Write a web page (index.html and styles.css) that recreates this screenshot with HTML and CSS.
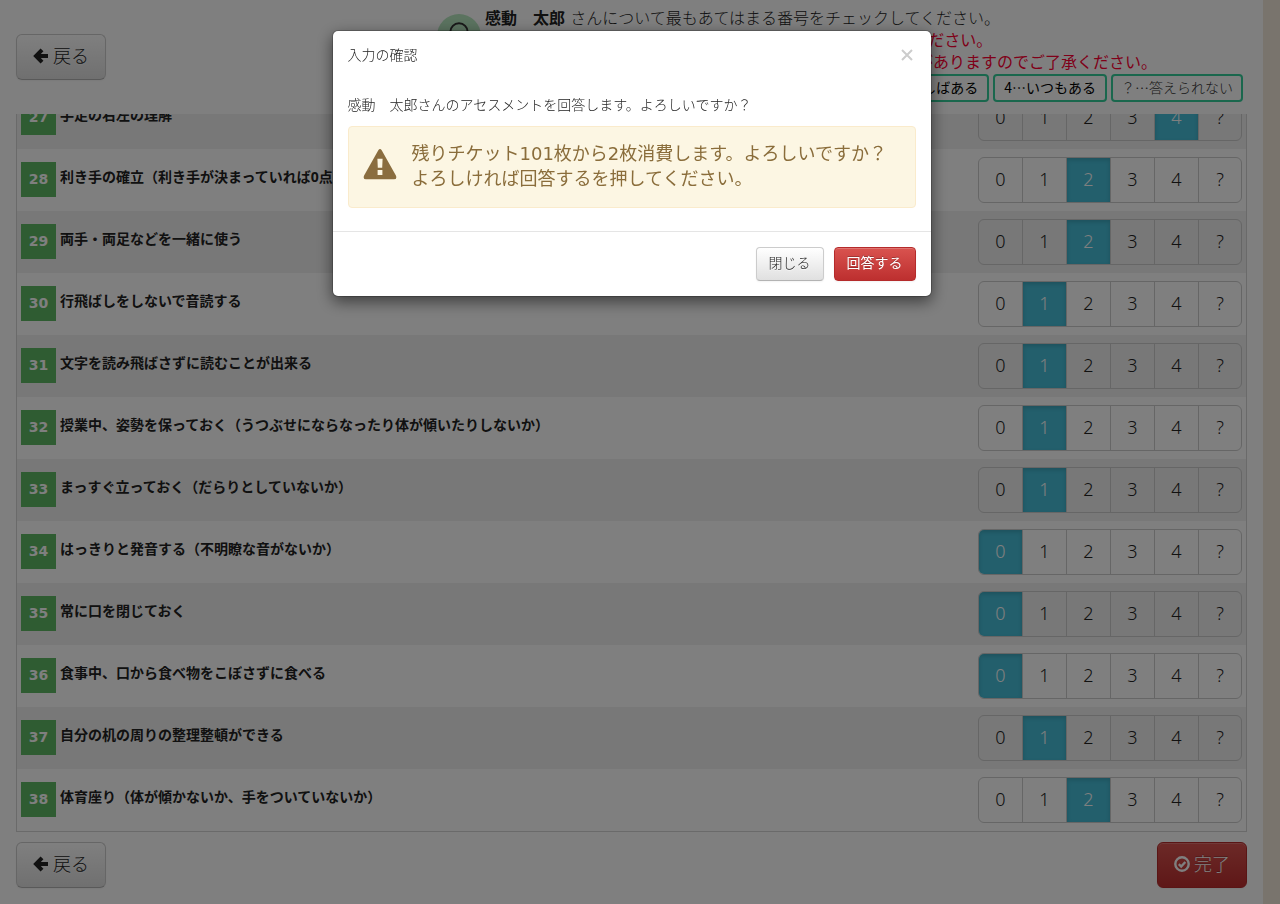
FILE: index.html
```html
<!DOCTYPE html>
<html lang="ja">
<head>
<meta charset="utf-8">
<meta name="viewport" content="width=device-width, initial-scale=1">
<title>アセスメント入力</title>
<link rel="stylesheet" href="styles.css">
</head>
<body>
<div class="page">
  <header class="top">
    <button type="button" class="btn btn-large">
      <svg class="icon-arrow" viewBox="0 0 16 16" aria-hidden="true"><path d="M9 1.800 3 8l6 6.200M3.500 8H15"/></svg>
      <span>戻る</span>
    </button>
    <div class="guide">
      <svg class="avatar" viewBox="0 0 44 44" aria-hidden="true"><circle class="avatar-bg" cx="22" cy="22" r="22"/><circle class="avatar-line" cx="22" cy="18" r="8.700"/><path class="avatar-line" d="M8 38c2-14 26-14 28 0"/></svg>
      <div class="guide-text">
        <p><strong>感動　太郎</strong> さんについて最もあてはまる番号をチェックしてください。</p>
        <p class="alert-line">すべての設問項目について、もれなく番号を選んで回答してください。</p>
        <p class="alert-line">途中で画面を閉じますと回答された内容が保存されない場合がありますのでご了承ください。</p>
        <ul class="legend">
          <li>0…まったくない</li>
          <li>1…まれにある</li>
          <li>2…ときどきある</li>
          <li>3…しばしばある</li>
          <li>4…いつもある</li>
          <li class="legend-muted">？…答えられない</li>
        </ul>
      </div>
    </div>
  </header>
  <main class="questions" id="questions"></main>
  <footer class="bottom">
    <button type="button" class="btn btn-large">
      <svg class="icon-arrow" viewBox="0 0 16 16" aria-hidden="true"><path d="M9 1.800 3 8l6 6.200M3.500 8H15"/></svg>
      <span>戻る</span>
    </button>
    <button type="button" class="btn btn-large btn-danger">
      <svg class="icon-check" viewBox="0 0 16 16" aria-hidden="true"><circle cx="8" cy="8" r="6.700"/><path d="M4.800 8.200 7.200 10.600 11.300 6"/></svg>
      <span>完了</span>
    </button>
  </footer>
</div>

<div class="backdrop">
  <section class="modal" role="dialog" aria-modal="true" aria-labelledby="modal-title">
    <div class="modal-header">
      <h2 id="modal-title">入力の確認</h2>
      <button type="button" class="close" aria-label="閉じる"><svg viewBox="0 0 12 12" aria-hidden="true"><path d="M1 1l10 10M11 1 1 11"/></svg></button>
    </div>
    <div class="modal-body">
      <p>感動　太郎さんのアセスメントを回答します。よろしいですか？</p>
      <div class="notice">
        <svg class="icon-warning" viewBox="0 0 34 32" aria-hidden="true"><path fill-rule="evenodd" d="M15.300 1.200Q17-1 18.700 1.200L32.900 26.500Q34.300 30.300 31 30.300H3Q-.3 30.300 1.100 26.500ZM14.400 9.800 14.800 18.700H19.200L19.600 9.800ZM14.600 21V26H19.400V21Z"/></svg>
        <p>残りチケット101枚から2枚消費します。よろしいですか？<br>よろしければ回答するを押してください。</p>
      </div>
    </div>
    <div class="modal-footer">
      <button type="button" class="btn">閉じる</button>
      <button type="button" class="btn btn-danger">回答する</button>
    </div>
  </section>
</div>
<script src="app.js"></script>
</body>
</html>
```

FILE: styles.css
```css
* { box-sizing: border-box; }

body {
  margin: 0;
  background: #f3e8da;
  color: #222;
  font: 300 14px/20px "Noto Sans", "Noto Sans CJK JP", sans-serif;
}

p, h2, ul { margin: 0; padding: 0; }

button { font: inherit; color: inherit; cursor: pointer; }

.page {
  display: flex;
  flex-direction: column;
  height: 100vh;
  margin-right: 17px;
  padding: 0 16px;
  background: #fff;
}

.top {
  display: flex;
  flex: none;
  align-items: center;
  justify-content: space-between;
  height: 114px;
}

.guide {
  display: flex;
  padding: 0 4px 4px 0;
  white-space: nowrap;
}

.avatar { width: 44px; height: 44px; margin-top: 6px; }
.avatar-bg { fill: #b6e6bf; }
.avatar-line { fill: none; stroke: #333; stroke-width: 2; }

.guide-text {
  font-family: "DejaVu Sans", "Noto Sans CJK JP", sans-serif;
  font-size: 16px;
  line-height: 22px;
}
.guide-text p { padding-left: 4px; }
.guide-text strong { font-weight: 700; }
.alert-line { color: #ff0033; font-weight: 400; }

.legend {
  display: flex;
  justify-content: flex-end;
  gap: 4px;
  list-style: none;
  font: 400 14px/22px "Noto Sans CJK JP", sans-serif;
  color: #000;
}
.legend li {
  padding: 0 9px 2px;
  border: 2px solid #35cf9b;
  border-radius: 4px;
}
.legend .legend-muted { padding: 0 8px 2px; color: #333; font-weight: 300; }

.questions {
  display: flex;
  flex: 1;
  flex-direction: column;
  justify-content: flex-end;
  min-height: 0;
  overflow: hidden;
  border: 1px solid #d4d4d4;
  border-top: 0;
}

.question {
  display: flex;
  flex: none;
  gap: 4px;
  min-width: 0;
  height: 62px;
  margin: 0;
  padding: 8px 4px;
  border: 0;
}
.question:nth-child(odd) { background: #f0f0f0; }

.number {
  width: 35px;
  height: 35px;
  margin-top: 5px;
  background: #5eb864;
  color: #fff;
  font: 700 14px/35px "DejaVu Sans", sans-serif;
  text-align: center;
}

.label {
  flex: 1;
  padding-top: 10px;
  font-weight: 700;
}

.choices {
  display: flex;
  height: 46px;
  border: 1px solid #ccc;
  border-radius: 6px;
  overflow: hidden;
}
.choices label {
  position: relative;
  width: 44px;
  border-right: 1px solid #ccc;
  font-size: 18px;
  line-height: 42px;
  text-align: center;
  cursor: pointer;
}
.choices label:last-child { width: 42px; border-right: 0; }
.choices input {
  position: absolute;
  inset: 0;
  margin: 0;
  opacity: 0;
}
.choices label:has(input:checked) {
  background: #46bed8;
  color: #fff;
  box-shadow: inset 0 2px 4px rgba(0, 0, 0, .15);
}

.bottom {
  display: flex;
  flex: none;
  justify-content: space-between;
  padding: 10px 0 16px;
}

.btn {
  display: inline-flex;
  align-items: center;
  justify-content: center;
  height: 34px;
  padding: 0 12px 2px;
  border: 1px solid #ccc;
  border-bottom-color: #b3b3b3;
  border-radius: 4px;
  background: linear-gradient(#fff, #e0e0e0);
  box-shadow: inset 0 1px 0 rgba(255, 255, 255, .2), 0 1px 2px rgba(0, 0, 0, .05);
  text-shadow: 0 1px 1px rgba(255, 255, 255, .75);
}
.btn-danger {
  border-color: #b52b2b;
  background: linear-gradient(#d9534f, #bd2f2f);
  color: #fff;
  font-weight: 400;
  text-shadow: 0 -1px 0 rgba(0, 0, 0, .25);
}
.btn-large {
  gap: 4px;
  height: 46px;
  padding: 0 16px 2px;
  border-radius: 6px;
  font-size: 18px;
  font-weight: 300;
}
.btn-large svg { width: 16px; height: 16px; fill: none; stroke: currentColor; }
.icon-arrow { stroke-width: 4; }
.icon-check { stroke-width: 2.400; }

.backdrop {
  position: fixed;
  inset: 0;
  padding: 30px 17px 30px 0;
  background: rgba(0, 0, 0, .5);
}

.modal {
  max-width: 600px;
  margin: 0 auto;
  border: 1px solid rgba(0, 0, 0, .2);
  border-radius: 6px;
  background: #fff;
  background-clip: padding-box;
  box-shadow: 0 5px 15px rgba(0, 0, 0, .5);
}

.modal-header {
  display: flex;
  align-items: center;
  justify-content: space-between;
  padding: 14px 15px;
}
.modal-header h2 { font-size: 14px; font-weight: 300; }

.close {
  padding: 3px;
  border: 0;
  background: none;
  line-height: 0;
}
.close svg { width: 12px; height: 12px; fill: none; stroke: #ccc; stroke-width: 2; }

.modal-body { padding: 16px 15px 23px; }

.notice {
  display: flex;
  gap: 15px;
  min-height: 82px;
  margin-top: 11px;
  padding: 14px;
  border: 1px solid #faebcc;
  border-radius: 4px;
  background: #fcf6e3;
  color: #8a6d3b;
  font-family: "DejaVu Sans", "Noto Sans CJK JP", sans-serif;
  font-size: 18px;
  font-weight: 400;
  line-height: 25px;
}
.icon-warning { flex: none; width: 34px; height: 32px; margin-top: 8px; fill: #8a6d3f; }

.modal-footer {
  display: flex;
  justify-content: flex-end;
  gap: 10px;
  padding: 15px;
  border-top: 1px solid #e5e5e5;
}
```

FILE: app.js
```js
const questions = [
  [27, "手足の右左の理解", 4],
  [28, "利き手の確立（利き手が決まっていれば0点）", 2],
  [29, "両手・両足などを一緒に使う", 2],
  [30, "行飛ばしをしないで音読する", 1],
  [31, "文字を読み飛ばさずに読むことが出来る", 1],
  [32, "授業中、姿勢を保っておく（うつぶせにならなったり体が傾いたりしないか）", 1],
  [33, "まっすぐ立っておく（だらりとしていないか）", 1],
  [34, "はっきりと発音する（不明瞭な音がないか）", 0],
  [35, "常に口を閉じておく", 0],
  [36, "食事中、口から食べ物をこぼさずに食べる", 0],
  [37, "自分の机の周りの整理整頓ができる", 1],
  [38, "体育座り（体が傾かないか、手をついていないか）", 2]
];

document.getElementById("questions").innerHTML = questions.map(([number, text, answer]) => `
  <div class="question" role="radiogroup" aria-labelledby="q${number}">
    <span class="number">${number}</span>
    <span class="label" id="q${number}">${text}</span>
    <div class="choices">${["0", "1", "2", "3", "4", "?"].map((choice, i) =>
      `<label><input type="radio" name="q${number}" value="${choice}"${i === answer ? " checked" : ""}>${choice}</label>`
    ).join("")}</div>
  </div>`).join("");
```
